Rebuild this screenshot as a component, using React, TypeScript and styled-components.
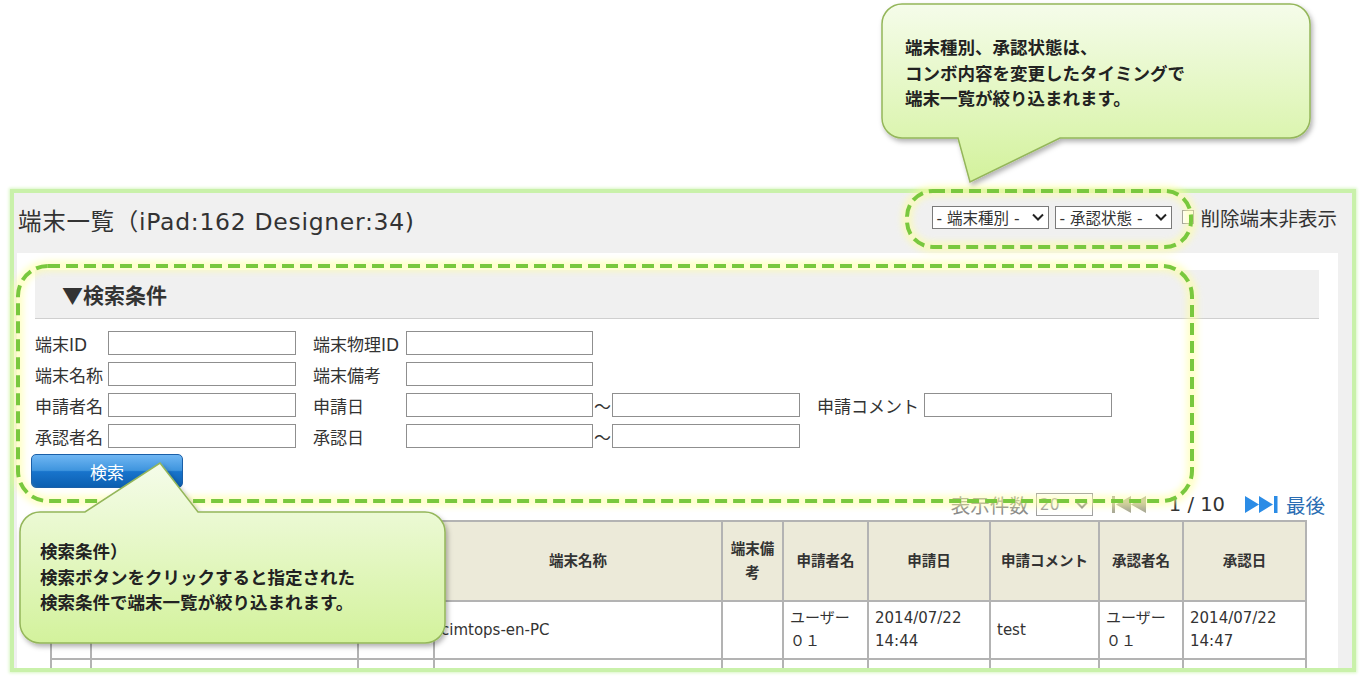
import React from 'react';
import styled, { createGlobalStyle } from 'styled-components';

const GlobalStyle = createGlobalStyle`
  html, body {
    margin: 0;
    padding: 0;
    background: #fff;
  }
  body {
    font-family: "DejaVu Sans", "Noto Sans CJK JP", sans-serif;
    color: #333;
  }
  * {
    box-sizing: border-box;
  }
`;

const Page = styled.div`
  position: relative;
  width: 1362px;
  height: 679px;
  overflow: hidden;
  padding-top: 189px;
`;

const Panel = styled.div`
  margin-left: 10px;
  width: 1346px;
  height: 483px;
  border: 4px solid #c9f1aa;
  box-shadow: 0 0 3px 1px #d9f6c4;
  background: #f0f0f0;
  display: flex;
  flex-direction: column;
  overflow: hidden;
`;

const PanelHeader = styled.div`
  height: 60px;
  flex: none;
  display: flex;
  align-items: center;
  justify-content: space-between;
  padding: 0 15px 6px 4px;
`;

const Title = styled.h1`
  margin: 0;
  font-size: 23.5px;
  font-weight: normal;
  letter-spacing: 0.7px;
  color: #333;
  white-space: nowrap;
`;

const Filters = styled.div`
  display: flex;
  align-items: center;
  margin-bottom: 6px;
`;

const SelectBox = styled.div<{ $width: number; $muted?: boolean }>`
  width: ${(p) => p.$width}px;
  height: 23px;
  border: 1px solid ${(p) => (p.$muted ? '#a0a0a0' : '#7a7a7a')};
  background: #fff;
  display: flex;
  align-items: center;
  justify-content: space-between;
  padding: 0 4px 0 3px;
  font-size: 15.5px;
  color: ${(p) => (p.$muted ? '#999' : '#333')};
  white-space: nowrap;
  & + & {
    margin-left: 6px;
  }
`;

const CheckBox = styled.span`
  display: inline-block;
  width: 12px;
  height: 14px;
  border: 1px solid #9a9a9a;
  background: #fff;
  margin: 0 6px 0 10px;
`;

const FilterLabel = styled.span`
  font-size: 19.5px;
  color: #333;
  white-space: nowrap;
`;

const Content = styled.div`
  flex: 1;
  margin: 0 14px 0 3px;
  background: #fff;
  padding-top: 17px;
  overflow: hidden;
`;

const SearchBar = styled.div`
  margin: 0 19px 0 18px;
  height: 49px;
  background: #f0f0f0;
  border-bottom: 1px solid #cfcfcf;
  display: flex;
  align-items: center;
  padding-left: 27px;
  font-family: "Noto Sans CJK JP", sans-serif;
  font-size: 21px;
  font-weight: bold;
  color: #333;
`;

const Form = styled.div`
  margin: 12px 0 0 18px;
  display: flex;
  flex-direction: column;
  gap: 7px;
`;

const FormRow = styled.div`
  display: flex;
  align-items: center;
  height: 24px;
`;

const FieldLabel = styled.label<{ $width: number; $gap?: number }>`
  flex: none;
  width: ${(p) => p.$width}px;
  margin-left: ${(p) => p.$gap || 0}px;
  font-size: 17px;
  color: #333;
  white-space: nowrap;
`;

const TextInput = styled.input<{ $width: number }>`
  flex: none;
  width: ${(p) => p.$width}px;
  height: 24px;
  border: 1px solid #8f8f8f;
  background: #fff;
  padding: 0 4px;
  font: inherit;
`;

const Tilde = styled.span`
  flex: none;
  width: 19px;
  text-align: center;
  font-size: 17px;
  color: #333;
`;

const SearchButton = styled.button`
  display: block;
  margin: 6px 0 0 14px;
  width: 152px;
  height: 34px;
  border: 1px solid #1a5fa8;
  border-radius: 5px;
  background: linear-gradient(to bottom, #6fb6f3 0%, #3f95de 48%, #1874cc 52%, #0c5fb1 100%);
  color: #fff;
  font-family: "DejaVu Sans", "Noto Sans CJK JP", sans-serif;
  font-size: 17px;
  cursor: pointer;
`;

const PagerRow = styled.div`
  height: 31px;
  margin-top: 1px;
  padding-right: 13px;
  display: flex;
  align-items: center;
  justify-content: flex-end;
`;

const PagerText = styled.span<{ $color: string; $gap?: number }>`
  font-size: 19.5px;
  color: ${(p) => p.$color};
  margin-left: ${(p) => p.$gap || 0}px;
  white-space: nowrap;
`;

const PagerIcon = styled.svg<{ $gap: number }>`
  margin-left: ${(p) => p.$gap}px;
  flex: none;
`;

const Table = styled.table`
  margin-left: 33px;
  width: 1255px;
  border-collapse: collapse;
  table-layout: fixed;
`;

const Th = styled.th`
  height: 80px;
  background: #ecead9;
  border: 2px solid #b3b3b3;
  font-size: 14.5px;
  font-weight: bold;
  line-height: 24px;
  text-align: center;
  padding: 0 4px;
  color: #333;
`;

const Td = styled.td`
  height: 58px;
  border: 2px solid #b3b3b3;
  font-size: 15px;
  line-height: 23px;
  padding: 0 6px;
  vertical-align: middle;
  color: #333;
`;

const Overlay = styled.svg`
  position: absolute;
  left: 0;
  top: 0;
  pointer-events: none;
`;

const CalloutBox = styled.div<{ $left: number; $top: number; $width: number; $height: number }>`
  position: absolute;
  left: ${(p) => p.$left}px;
  top: ${(p) => p.$top}px;
  width: ${(p) => p.$width}px;
  height: ${(p) => p.$height}px;
`;

const CalloutShape = styled.svg`
  position: absolute;
  left: 0;
  top: 0;
  overflow: visible;
`;

const CalloutText = styled.div<{ $top: number; $left: number }>`
  position: relative;
  padding: ${(p) => p.$top}px 0 0 ${(p) => p.$left}px;
  font-family: "Noto Sans CJK JP", sans-serif;
  font-size: 17.5px;
  font-weight: bold;
  line-height: 25.5px;
  color: #222;
  white-space: pre-line;
`;

const Chevron = ({ color = '#222' }: { color?: string }) => (
  <svg width="12" height="8" viewBox="0 0 12 8">
    <path d="M1 1.5 L6 6.5 L11 1.5" fill="none" stroke={color} strokeWidth="2" />
  </svg>
);

type CalloutProps = {
  left: number;
  top: number;
  width: number;
  height: number;
  path: string;
  id: string;
  textTop: number;
  textLeft: number;
  text: string;
};

const Callout = ({ left, top, width, height, path, id, textTop, textLeft, text }: CalloutProps) => (
  <CalloutBox $left={left} $top={top} $width={width} $height={height}>
    <CalloutShape width={width} height={height} viewBox={`0 0 ${width} ${height}`}>
      <defs>
        <linearGradient id={`${id}-fill`} x1="0" y1="0" x2="0" y2="1">
          <stop offset="0" stopColor="#f5fcea" />
          <stop offset="1" stopColor="#d3f29c" />
        </linearGradient>
        <filter id={`${id}-shadow`} x="-10%" y="-10%" width="120%" height="130%">
          <feDropShadow dx="2" dy="3" stdDeviation="2.5" floodColor="#000" floodOpacity="0.3" />
        </filter>
      </defs>
      <path d={path} fill={`url(#${id}-fill)`} stroke="#94b65a" strokeWidth="1.5" filter={`url(#${id}-shadow)`} />
    </CalloutShape>
    <CalloutText $top={textTop} $left={textLeft}>{text}</CalloutText>
  </CalloutBox>
);

// the first three columns sit under the lower callout, so they stay blank
const headers = ['', '', '', '端末名称', '端末備考', '申請者名', '申請日', '申請コメント', '承認者名', '承認日'];
const colWidths = [40, 267, 76, 288, 61, 85, 122, 109, 84, 123];
const rows = [
  ['', '', '', 'cimtops-en-PC', '', 'ユーザー０１', '2014/07/22 14:44', 'test', 'ユーザー０１', '2014/07/22 14:47'],
  ['', '', '', '', '', '', '', '', '', ''],
];

const highlights = [
  { x: 907, y: 191, w: 284, h: 56, r: 26 },
  { x: 18, y: 266, w: 1174, h: 235, r: 30 },
];

const App: React.FC = () => {
  return (
    <Page>
      <GlobalStyle />
      <Panel>
        <PanelHeader>
          <Title>端末一覧（iPad:162 Designer:34)</Title>
          <Filters>
            <SelectBox $width={117}>
              <span>- 端末種別 -</span>
              <Chevron />
            </SelectBox>
            <SelectBox $width={117}>
              <span>- 承認状態 -</span>
              <Chevron />
            </SelectBox>
            <CheckBox />
            <FilterLabel>削除端末非表示</FilterLabel>
          </Filters>
        </PanelHeader>

        <Content>
          <SearchBar>▼検索条件</SearchBar>
          <Form>
            <FormRow>
              <FieldLabel $width={73}>端末ID</FieldLabel>
              <TextInput $width={188} />
              <FieldLabel $width={93} $gap={17}>端末物理ID</FieldLabel>
              <TextInput $width={187} />
            </FormRow>
            <FormRow>
              <FieldLabel $width={73}>端末名称</FieldLabel>
              <TextInput $width={188} />
              <FieldLabel $width={93} $gap={17}>端末備考</FieldLabel>
              <TextInput $width={187} />
            </FormRow>
            <FormRow>
              <FieldLabel $width={73}>申請者名</FieldLabel>
              <TextInput $width={188} />
              <FieldLabel $width={93} $gap={17}>申請日</FieldLabel>
              <TextInput $width={187} />
              <Tilde>～</Tilde>
              <TextInput $width={188} />
              <FieldLabel $width={107} $gap={17}>申請コメント</FieldLabel>
              <TextInput $width={188} />
            </FormRow>
            <FormRow>
              <FieldLabel $width={73}>承認者名</FieldLabel>
              <TextInput $width={188} />
              <FieldLabel $width={93} $gap={17}>承認日</FieldLabel>
              <TextInput $width={187} />
              <Tilde>～</Tilde>
              <TextInput $width={188} />
            </FormRow>
          </Form>
          <SearchButton>検索</SearchButton>

          <PagerRow>
            <PagerText $color="#8a8a8a">表示件数</PagerText>
            <SelectBox $width={57} $muted style={{ marginLeft: 7 }}>
              <span>20</span>
              <Chevron color="#888" />
            </SelectBox>
            <PagerIcon $gap={19} width="34" height="17" viewBox="0 0 34 17">
              <rect x="0" y="0" width="3" height="17" fill="#a9a996" />
              <path d="M19 0 L4 8.5 L19 17 Z M34 0 L19 8.5 L34 17 Z" fill="#a9a996" />
            </PagerIcon>
            <PagerText $color="#333" $gap={23}>1 / 10</PagerText>
            <PagerIcon $gap={20} width="33" height="17" viewBox="0 0 33 17">
              <path d="M0 0 L14 8.5 L0 17 Z M14 0 L28 8.5 L14 17 Z" fill="#2b8ce6" />
              <rect x="29" y="0" width="3.5" height="17" fill="#2b8ce6" />
            </PagerIcon>
            <PagerText $color="#2a6db3" $gap={8}>最後</PagerText>
          </PagerRow>

          <Table>
            <colgroup>
              {colWidths.map((w, i) => (
                <col key={i} style={{ width: w }} />
              ))}
            </colgroup>
            <thead>
              <tr>
                {headers.map((h, i) => (
                  <Th key={i}>{h}</Th>
                ))}
              </tr>
            </thead>
            <tbody>
              {rows.map((row, r) => (
                <tr key={r}>
                  {row.map((cell, i) => (
                    <Td key={i}>{cell}</Td>
                  ))}
                </tr>
              ))}
            </tbody>
          </Table>
        </Content>
      </Panel>

      <Overlay width="1362" height="679" viewBox="0 0 1362 679">
        <defs>
          <filter id="hl-glow" x="-5%" y="-20%" width="110%" height="140%">
            <feGaussianBlur stdDeviation="3" />
          </filter>
        </defs>
        {highlights.map((h, i) => (
          <g key={i}>
            <rect x={h.x} y={h.y} width={h.w} height={h.h} rx={h.r} fill="none" stroke="#ffff9e" strokeWidth="11" opacity="0.55" filter="url(#hl-glow)" />
            <rect x={h.x} y={h.y} width={h.w} height={h.h} rx={h.r} fill="none" stroke="#79c83e" strokeWidth="4" strokeDasharray="12 6" />
          </g>
        ))}
      </Overlay>

      <Callout
        id="c1"
        left={882}
        top={4}
        width={428}
        height={180}
        path="M20 0 H408 A20 20 0 0 1 428 20 V114 A20 20 0 0 1 408 134 H178 L88 178 L76 134 H20 A20 20 0 0 1 0 114 V20 A20 20 0 0 1 20 0 Z"
        textTop={30}
        textLeft={23}
        text={'端末種別、承認状態は、\nコンボ内容を変更したタイミングで\n端末一覧が絞り込まれます。'}
      />
      <Callout
        id="c2"
        left={20}
        top={463}
        width={425}
        height={180}
        path="M20 49 H65 L140 0 L178 49 H405 A20 20 0 0 1 425 69 V160 A20 20 0 0 1 405 180 H20 A20 20 0 0 1 0 160 V69 A20 20 0 0 1 20 49 Z"
        textTop={75}
        textLeft={20}
        text={'検索条件）\n検索ボタンをクリックすると指定された\n検索条件で端末一覧が絞り込まれます。'}
      />
    </Page>
  );
};

export default App;
